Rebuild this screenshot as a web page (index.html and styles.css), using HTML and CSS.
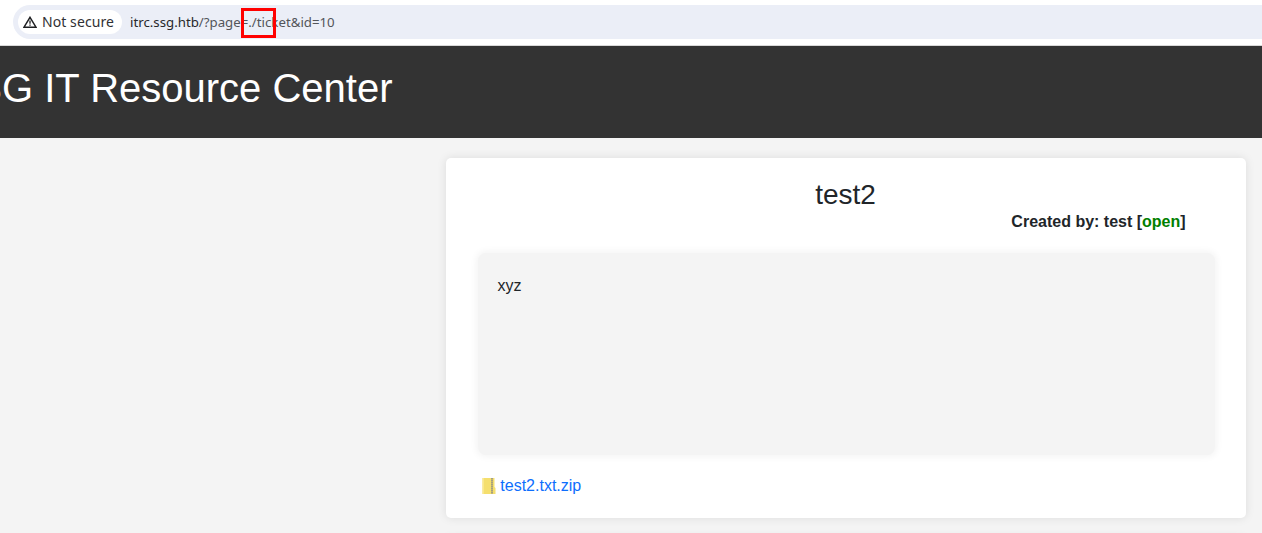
FILE: index.html
```
<!DOCTYPE html>
<html lang="en">
<head>
<meta charset="utf-8">
<title>SSG IT Resource Center</title>
<link rel="stylesheet" href="styles.css">
</head>
<body>
<div class="toolbar">
  <div class="omnibox">
    <div class="security">
      <svg class="warning" viewBox="0 0 14 12" width="14" height="12"><path d="M7 1.3 13 11.2H1Z" fill="none" stroke="#1f2023" stroke-width="1.5"/><path d="M7 4.6v3.1M7 8.4v1.3" stroke="#1f2023" stroke-width="1.3"/></svg>
      <span>Not secure</span>
    </div>
    <div class="url"><span class="host">itrc.ssg.htb</span>/?page=./ticket&amp;id=10<span class="highlight"></span></div>
  </div>
</div>
<header class="header"><h1 class="brand">SSG IT Resource Center</h1></header>
<main class="main">
  <section class="card ticket">
    <h3 class="title">test2</h3>
    <div class="meta">Created by: test [<span class="open">open</span>]</div>
    <div class="body">xyz</div>
    <div class="attachment">
      <svg width="14" height="18" viewBox="0 0 14 18"><path d="M.5 1h12v9l1 1v6H.5Z" fill="#f5df6e"/><path d="M.5 1H2v16H.5Z" fill="#f9e88d"/><path d="M9 1h2v16H9Z" fill="#c5b86f"/><path d="M10 1v16" stroke="#95958f" stroke-width="1.4" stroke-dasharray="1 1"/></svg>
      <a class="file">test2.txt.zip</a>
    </div>
  </section>
  <section class="card next"></section>
</main>
</body>
</html>
```
FILE: styles.css
```
* { box-sizing: border-box; }
body {
  margin: 0;
  height: 533px;
  overflow: hidden;
  display: flex;
  flex-direction: column;
  background: #f4f4f4;
  color: #212529;
  font: 16px/24px "Liberation Sans", Arial, sans-serif;
}
.toolbar {
  flex: none;
  height: 46px;
  padding: 5px 0 0 13px;
  background: #fff;
  border-bottom: 1px solid #d9d9d9;
}
.omnibox {
  height: 34px;
  display: flex;
  align-items: center;
  padding-left: 5px;
  background: #ebeef7;
  border-radius: 17px 0 0 17px;
  font-family: "Noto Sans", sans-serif;
  font-size: 14px;
}
.security {
  display: flex;
  align-items: center;
  gap: 5px;
  width: 104px;
  height: 24px;
  padding-left: 5px;
  border-radius: 12px;
  background: #fff;
  color: #303134;
  letter-spacing: .08px;
  white-space: nowrap;
}
.warning { flex: none; }
.url {
  position: relative;
  margin-left: 8px;
  color: #53555a;
  font-size: 13.25px;
  white-space: nowrap;
}
.host { color: #27282b; }
.highlight {
  position: absolute;
  left: 110.5px;
  top: -2px;
  width: 35px;
  height: 30px;
  border: 3px solid #f00;
}
.header {
  flex: none;
  height: 92px;
  padding-top: 18px;
  background: #333;
}
.brand {
  display: flex;
  justify-content: flex-end;
  width: 392.5px;
  margin: 0;
  overflow: hidden;
  color: #fff;
  font-size: 40px;
  font-weight: 400;
  line-height: 48px;
  white-space: nowrap;
}
.main {
  flex: none;
  display: flex;
  flex-direction: column;
  gap: 20px;
  width: 800px;
  margin: 20px 0 0 446px;
}
.card {
  background: #fff;
  border-radius: 5px;
  box-shadow: 0 0 10px rgba(0, 0, 0, .1);
}
.ticket {
  height: 360px;
  padding: 20px 30px;
}
.next { height: 60px; }
.title {
  margin: 0;
  padding-right: 1px;
  text-align: center;
  font-size: 28px;
  font-weight: 400;
  line-height: 34px;
}
.meta {
  padding-right: 30.4px;
  margin-top: -2px;
  text-align: right;
  font-weight: 700;
}
.open { color: green; }
.body {
  height: 202px;
  margin: 19px 1.5px 0;
  padding: 21px 20px;
  background: #f4f4f4;
  border-radius: 8px;
  box-shadow: 0 0 7px 2px #f4f4f4;
}
.attachment {
  display: flex;
  align-items: center;
  gap: 4.3px;
  margin-top: 19px;
  padding-left: 6px;
}
.file { color: #0d6efd; }
```
